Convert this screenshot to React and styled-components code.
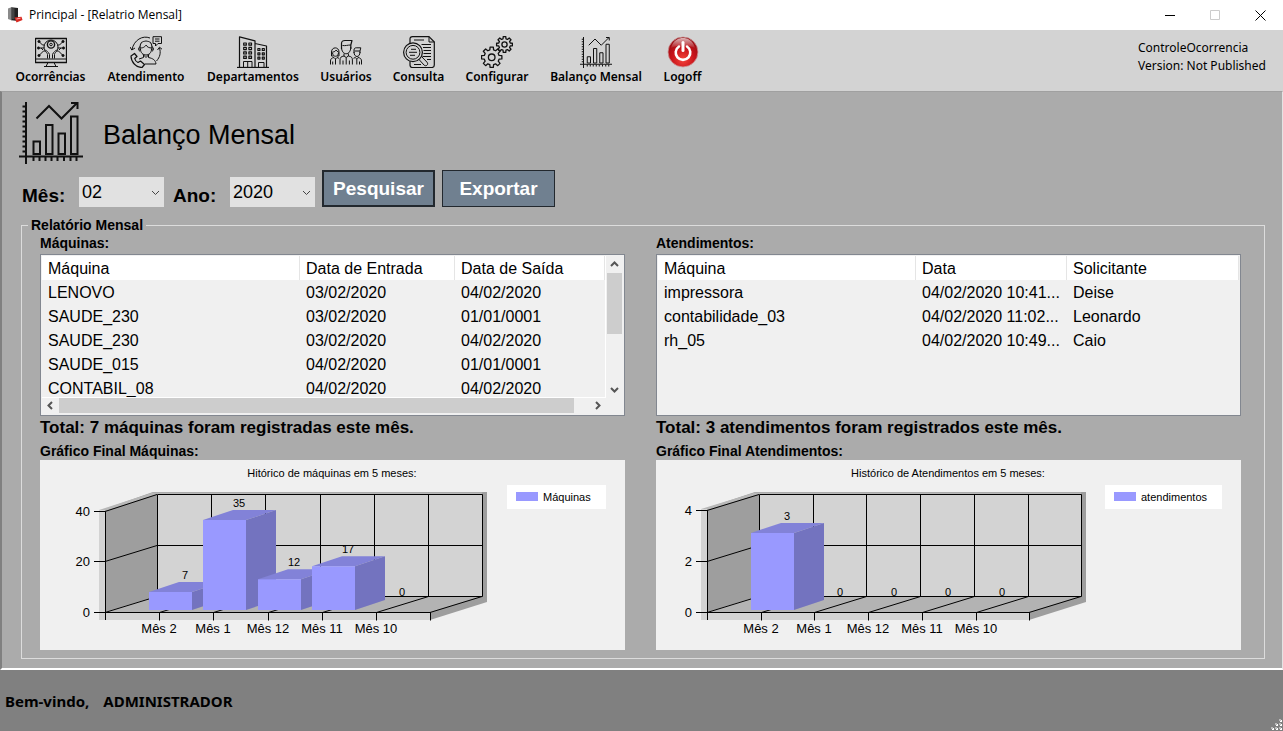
import React from "react";
import styled, { createGlobalStyle } from "styled-components";

const SANS = '"Liberation Sans", Arial, sans-serif';
const UI = '"Noto Sans", "Open Sans", sans-serif';

const GlobalStyle = createGlobalStyle`
  *, *::before, *::after { box-sizing: border-box; }
  body { margin: 0; background: #ababab; color: #000; font-family: ${SANS}; }
  button, select { font: inherit; color: inherit; margin: 0; border-radius: 0; }
`;

/* ---------- window frame ---------- */

const Window = styled.div`
  display: flex;
  flex-direction: column;
  min-height: 100vh;
`;

const TitleBar = styled.header`
  display: flex;
  align-items: center;
  height: 30px;
  padding-left: 7px;
  background: #fff;
  font: 12px/16px "Open Sans", "Noto Sans", sans-serif;
`;

const WindowTitle = styled.span`
  flex: 1;
  padding-left: 6px;
  white-space: nowrap;
`;

const WindowButton = styled.button`
  display: grid;
  place-items: center;
  width: 45px;
  height: 28px;
  padding: 0;
  border: 0;
  background: none;
`;

const ToolBar = styled.nav`
  display: flex;
  gap: 20px;
  height: 61px;
  padding: 6px 15px 0;
  background: #d3d3d3;
`;

const ToolButton = styled.button`
  display: flex;
  flex-direction: column;
  align-items: center;
  flex: none;
  width: ${(p) => p.$width}px;
  height: 50px;
  padding: 0;
  border: 0;
  background: none;
  font: 600 12px/18px ${UI};
  white-space: nowrap;

  svg { flex: none; display: block; }
`;

const Version = styled.div`
  margin-left: auto;
  padding-top: 3px;
  width: 130px;
  font: 12px/18px ${UI};
  white-space: nowrap;
`;

const Client = styled.main`
  flex: 1;
  border: solid;
  border-width: 1px 1px 2px 2px;
  border-color: #a0a0a0 #e3e3e3 #fff #808080;
  background: #ababab;
`;

const StatusBar = styled.footer`
  position: relative;
  display: flex;
  align-items: center;
  gap: 14px;
  height: 61px;
  padding-left: 5px;
  background: #808080;
  font: 700 15px/20px ${UI};
`;

const Grip = styled.svg`
  position: absolute;
  right: 1px;
  bottom: 1px;
`;

/* ---------- page ---------- */

const PageHead = styled.div`
  display: flex;
  align-items: center;
  gap: 20px;
  padding: 8px 17px 0;
`;

const PageTitle = styled.h1`
  margin: 0;
  padding-top: 6px;
  font-size: 27px;
  line-height: 32px;
  font-weight: 400;
`;

const Filters = styled.form`
  display: flex;
  align-items: flex-end;
  gap: 7px;
  padding: 6px 18px 10px;
`;

const Field = styled.div`
  display: flex;
  align-items: flex-end;
`;

const FieldLabel = styled.label`
  width: 59px;
  padding-left: 2px;
  font-size: 19px;
  line-height: 22px;
  font-weight: 700;
`;

const Combo = styled.div`
  position: relative;
  width: 85px;
  height: 30px;

  svg { position: absolute; right: 4px; top: 11px; pointer-events: none; }
`;

const ComboSelect = styled.select`
  appearance: none;
  width: 100%;
  height: 100%;
  padding: 0 16px 0 3px;
  border: 0;
  background: #e1e1e1;
  font-size: 18px;
  line-height: 30px;
`;

const ActionButton = styled.button`
  width: 113px;
  height: 37px;
  padding: 0;
  border: ${(p) => (p.$primary ? 2 : 1)}px solid #22282e;
  background: #708090;
  color: #fff;
  font-size: 19px;
  line-height: 24px;
  font-weight: 700;
`;

const Group = styled.fieldset`
  display: grid;
  grid-template-columns: minmax(0, 1fr) minmax(0, 1fr);
  gap: 31px;
  margin: 0 17px 9px 19px;
  padding: 1px 23px 8px 18px;
  border: 1px solid #dcdcdc;
`;

const GroupTitle = styled.legend`
  margin-left: -12px;
  padding: 0 3px;
  font-size: 14px;
  line-height: 16px;
  font-weight: 700;
`;

const Caption = styled.h2`
  margin: 0;
  font-size: 14px;
  line-height: 18px;
  font-weight: 700;
`;

const Total = styled.p`
  margin: 0 0 2px;
  font-size: 17px;
  line-height: 24px;
  font-weight: 700;
  white-space: nowrap;
`;

const ListBox = styled.div`
  display: grid;
  grid-template-columns: minmax(0, 1fr) ${(p) => (p.$scroll ? "17px" : "0")};
  grid-template-rows: minmax(0, 1fr) ${(p) => (p.$scroll ? "16px" : "0")};
  height: 162px;
  margin-top: 2px;
  padding: 1px;
  border: 1px solid #828790;
  background: #f0f0f0;
`;

const ListView = styled.div`
  overflow: hidden;
  border: solid #fff;
  border-width: ${(p) => (p.$scroll ? "0 1px 1px 0" : "0")};
`;

const Table = styled.table`
  width: 100%;
  table-layout: fixed;
  border-collapse: separate;
  border-spacing: 0;
  font-size: 16px;
  line-height: 22px;

  th, td {
    height: 24px;
    padding: 2px 6px 0;
    text-align: left;
    font-weight: 400;
    white-space: nowrap;
    overflow: hidden;
  }
  th { background: #fff; border-right: 1px solid #e5e5e5; }
`;

const ScrollBar = styled.div`
  display: flex;
  flex-direction: ${(p) => (p.$vertical ? "column" : "row")};
  padding: ${(p) => (p.$vertical ? "0 1px" : "0 0 1px")};
`;

const ScrollArrow = styled.button`
  display: grid;
  place-items: center;
  flex: none;
  width: ${(p) => (p.$vertical ? 15 : 17)}px;
  height: ${(p) => (p.$vertical ? 17 : 15)}px;
  padding: 0;
  border: 0;
  background: none;
`;

const Thumb = styled.div`
  flex: ${(p) => p.$size} 1 0;
  background: #cdcdcd;
`;

const Rest = styled.div`
  flex: ${(p) => p.$size} 1 0;
`;

const ChartPanel = styled.div`
  height: 190px;
  background: #f0f0f0;

  svg { display: block; width: 100%; height: 190px; }
  text { font-family: ${SANS}; fill: #000; }
`;

/* ---------- icons ---------- */

const Line = ({ size = 32, box = 32, w = 1, children }) => (
  <svg width={size} height={size} viewBox={`0 0 ${box} ${box}`} fill="none" stroke="#111"
    strokeWidth={w} strokeLinejoin="round" aria-hidden="true">
    {children}
  </svg>
);

const MonitorIcon = () => (
  <Line>
    <rect x="0.5" y="2.5" width="31" height="24" strokeWidth="1.3" />
    <path d="M.5 23h31M13 26.500l-2 4h10l-2-4M9 30.500h14" />
    <path d="M12.500 22.500v-4c0-2-3.500-3-3.500-7.500a7 7 0 0 1 14 0c0 4.500-3.500 5.500-3.500 7.500v4" />
    <circle cx="16" cy="8.500" r="3.600" strokeWidth="1.400" />
    <circle cx="16" cy="8.500" r="1.300" />
    <path d="M10 13.500c2 2.500 3.500 2 4.500 5v4M22 13.500c-2 2.500-3.500 2-4.500 5v4" />
    <path d="M4.500 6l3 3h2M4.500 12h5M4.500 19l4-4h2M27.500 6l-3 3h-2M27.500 12h-5M27.500 19l-4-4h-2M6 12l2 2M26 12l-2 2" />
    <g fill="#111" strokeWidth=".6">
      <circle cx="4" cy="5.500" r="1.200" /><circle cx="3.500" cy="12" r="1.200" /><circle cx="4" cy="19.500" r="1.200" />
      <circle cx="28" cy="5.500" r="1.200" /><circle cx="28.500" cy="12" r="1.200" /><circle cx="28" cy="19.500" r="1.200" />
    </g>
  </Line>
);

const SupportIcon = () => (
  <Line>
    <path d="M23 .7h8.500v6.800H28l-2.500 2.500V7.500H23zM25 3h4.500M25 5.200h4.500" />
    <path d="M20 2C12.500-1 4 4 2 13.500M0 11l1.800 3L5 12" />
    <path d="M29.500 12c1.500 5 .5 9-3 13M27.500 14l2-2.800 2.500 2" />
    <path d="M10 14.500V11c0-8 12-8 12 0v3.500" strokeWidth="1.200" />
    <path d="M10 12c4 0 5-1.500 6-3 1 2 3 3 6 3M10.500 13c0 8 11 8 11 0" />
    <path d="M10 11c-2 0-2 4 0 4M22 11c2 0 2 4 0 4M13 18.500l3 3 3-3" />
    <path d="M13.500 19v2.500L9 23M18.500 19v2.500c4.500 1 7 2.500 7.500 6.500H15" />
    <path d="M4.500 17.500L1 20c0 6 5 11.500 11 11.500l2.500-3-4-3.500-2.500 1.500c-2-1-3-2.500-3.300-4l2.300-2z" strokeWidth="1.200" />
  </Line>
);

const BuildingsIcon = () => (
  <Line>
    <path d="M0 31.500h32" strokeWidth="1.300" />
    <path d="M2.500 31V.8L18 4.800V31M18 7.500l11.500 2.500V31" strokeWidth="1.200" />
    <path d="M6.500 31v-5.500h8.500V31M10.700 25.500V31M21.500 31v-4.500H27V31" />
    <g strokeWidth="1.200">
      {[7, 11.4, 15.8, 20.2].map((y) => (
        <React.Fragment key={y}>
          <rect x="6.700" y={y} width="2.600" height="2.200" />
          <rect x="11.900" y={y} width="2.600" height="2.200" />
        </React.Fragment>
      ))}
      {[12.5, 16.8, 21.1].map((y) => (
        <React.Fragment key={y}>
          <rect x="20.900" y={y} width="2" height="2" />
          <rect x="25.300" y={y} width="2" height="2" />
        </React.Fragment>
      ))}
    </g>
  </Line>
);

const UsersIcon = () => (
  <Line>
    <path d="M11.500 13V7.500c0-2 1.500-3 3.500-3h7L20.800 9v4" strokeWidth="1.200" />
    <path d="M11.500 11c0 9 9.300 9 9.300 0M12.500 9.500c3 .5 5-.5 8.300-.5M14 17.500v2.500l2.200 1.500 2.200-1.500v-2.500" />
    <path d="M14 20c-3 .5-4 1.500-4 4v4.500M18.400 20c3 .5 4 1.500 4 4v4.500M16.200 21.500v7M13 24.500v4M19.400 24.500v4" />
    <path d="M1.500 20v-4c0-5.500 7.500-5.500 7.500 0v4M2.500 16c2 0 3-1 3.500-2 .5 1 1.500 1.500 2.500 2M2.500 16.500c0 5 6 5 6 0M1.500 20h2M7 20h2" />
    <path d="M.5 28.500V25c0-2 1-3 3.500-3.500l1.500 1.500L7 21.500l2 .8M2.700 25.500v3M5.500 23v5.500" />
    <path d="M24 17v-3c0-1.500 1-2.200 2.200-2.200h4.600L30 15v2M24 16c0 6 6 6 6 0M24.500 15H30" />
    <path d="M31.500 28.500V25c0-2-1-3-3.500-3.500L26.800 23l-1.600-1.500-1.700.8M29.500 25.500v3M26.800 23v5.500" />
  </Line>
);

const SearchDocIcon = () => (
  <Line>
    <path d="M7 8V3C7 1.500 7.800.7 9.500.7H26l5.300 5.300v23c0 1.500-.8 2.500-2.500 2.500H9.500C7.800 31.500 7 30.500 7 29v-4" strokeWidth="1.200" />
    <path d="M26 .7V6h5.300M11 4h10M18.500 8.500H28M20 11.500h8M20.500 14.500H28M20.500 17.500H28M19.500 20.500H28M24 23.500h4M11 28.500h7" />
    <circle cx="10" cy="16.300" r="9.400" strokeWidth="1.200" />
    <circle cx="10" cy="16.300" r="6.900" />
    <path d="M8 13.300h5M6 16.300h8M7 19.300h5M16 23.500l5 5.500c2 2 5-.5 3-2.800L18.500 20.500" />
  </Line>
);

function gear(cx, cy, outer, inner, teeth) {
  const step = (Math.PI * 2) / teeth;
  const pts = [];
  for (let i = 0; i < teeth; i += 1) {
    [[-0.32, inner], [-0.2, outer], [0.2, outer], [0.32, inner]].forEach(([k, r]) => {
      const a = (i + k) * step;
      pts.push(`${(cx + r * Math.cos(a)).toFixed(2)} ${(cy + r * Math.sin(a)).toFixed(2)}`);
    });
  }
  return `M${pts.join("L")}Z`;
}

const GearsIcon = () => (
  <Line w={1.3}>
    <path d={gear(10.7, 21.3, 10.3, 7.6, 8)} />
    <circle cx="10.700" cy="21.300" r="3.300" />
    <path d={gear(23.5, 8.5, 8, 5.9, 8)} />
    <circle cx="23.500" cy="8.500" r="2.600" />
  </Line>
);

const ChartIcon = ({ size }) => (
  <Line size={size} box={64} w={2}>
    <path d="M7 2v62M0 56.500h64" />
    <path d="M3.500 6.500H7M3.500 11.500H7M3.500 16.500H7M3.500 21.500H7M3.500 26.500H7M3.500 31.500H7M3.500 36.500H7M3.500 41.500H7M3.500 46.500H7M3.500 51.500H7" />
    <path d="M14.500 57v4M20.500 57v4M26.500 57v4M32.500 57v4M38.500 57v4M45 57v4M51.500 57v4M57.500 57v4" />
    <path d="M14.500 54V41.500h6.500V54zM27 54V25h6.500v29zM39.500 54V33.500H46V54zM52 54V16.500h6.500V54z" strokeLinejoin="miter" />
    <path d="M17.500 18.500L30 6l12.500 12.500L57.500 3.500M52 3h6.500v6" strokeLinejoin="miter" />
  </Line>
);

const PowerIcon = () => (
  <svg width="32" height="32" viewBox="0 0 32 32" aria-hidden="true">
    <defs>
      <radialGradient id="red" cx=".5" cy=".75" r=".75">
        <stop offset="0" stopColor="#f4443a" />
        <stop offset=".5" stopColor="#c9141b" />
        <stop offset="1" stopColor="#8d0a10" />
      </radialGradient>
      <linearGradient id="gloss" x1="0" y1="0" x2="0" y2="1">
        <stop offset="0" stopColor="#fff" stopOpacity=".7" />
        <stop offset="1" stopColor="#fff" stopOpacity=".05" />
      </linearGradient>
    </defs>
    <circle cx="16" cy="16" r="15" fill="url(#red)" stroke="#c99" strokeWidth=".8" />
    <path d="M4 12C6 4 12 2 16 2s10 2 12 10c-6-3-18-3-24 0z" fill="url(#gloss)" />
    <path d="M12 10.500a7.300 7.300 0 1 0 8 0" fill="none" stroke="#fff" strokeWidth="2.600" strokeLinecap="round" />
    <path d="M16 6.500v8" stroke="#fff" strokeWidth="3" strokeLinecap="round" />
  </svg>
);

const AppIcon = () => (
  <svg width="16" height="16" viewBox="0 0 16 16" aria-hidden="true">
    <path d="M1 1.500L5 0v13.500L1 12z" fill="#8a8a8a" />
    <path d="M4.500.2L11 1v13l-6.500-.8z" fill="#222" />
    <path d="M5 1l2.500.3v11L5 12z" fill="#444" />
    <path d="M7.500 10.500l7-.8 1 3.300-6 2.500z" fill="#d92a22" />
    <path d="M9.500 12l4-.8" stroke="#fbb" strokeWidth=".9" />
  </svg>
);

const arrows = {
  up: "M1 6l3.500-3.500L8 6",
  down: "M1 3l3.500 3.500L8 3",
  left: "M6 1L2.500 4.500 6 8",
  right: "M3 1l3.500 3.500L3 8",
};

const Chevron = ({ dir, w = 2, color = "#555" }) => (
  <svg width="9" height="9" viewBox="0 0 9 9" fill="none" stroke={color} strokeWidth={w} aria-hidden="true">
    <path d={arrows[dir]} />
  </svg>
);

/* ---------- chart ---------- */

const FLOOR = 152;
const DX = 52;

function Chart({ title, series, left, step, scale, top, legendX, ticks, data }) {
  const at = (i) => left + Math.round(step * i);
  const right = at(6);
  const lines = [1, 2, 3, 4, 5].map(at);
  const unit = 102.8 / scale;
  return (
    <svg viewBox="0 0 585 190" role="img" aria-label={title}>
      <text x="292" y="17" fontSize="11" textAnchor="middle">{title}</text>

      <path d={`M${left - 6} ${top}L${left + DX - 4} 32H${right + DX + 5}V142L${right} 160H${left - 6}z`} fill="#9e9e9e" />
      <path d={`M${left - 6} ${top - 1}L${left + DX - 4} 32.500H${right + DX}v2H${left + DX}L${left} ${top}z`} fill="#b8b8b8" />
      <path d={`M${left - 6} ${top - 1}h6V${FLOOR}H${right}v8H${left - 6}z`} fill="#d3d3d3" />
      <path d={`M${left + DX} 34H${right + DX}v102H${left + DX}z`} fill="#d3d3d3" />
      <path d={`M${left} ${top}L${left + DX} 34V136L${left} ${FLOOR}z`} fill="#9e9e9e" />
      <path d={`M${left} ${FLOOR}L${left + DX} 136H${right + DX}L${right} ${FLOOR}z`} fill="#b3b3b3" />

      <g stroke="#000" fill="none">
        <path d={`M${left + DX}.5 34.500H${right + DX}.5V136.500H${left + DX}.5z`} />
        <path d={`M${left + DX} 85.500H${right + DX}`} />
        {lines.map((x) => (
          <path key={x} d={`M${x + DX}.5 34V136.500L${x}.5 152.500v8`} />
        ))}
        <path d={`M${left}.5 160V${top}.5M${left} ${FLOOR}.5H${right}.5v8M${left + DX} 34.500L${left} ${top}.5`} />
        <path d={`M${left + DX} 85.500L${left} 101.500M${left + DX} 136.500L${left} 152.500M${right + DX} 136.500L${right} 152.500`} />
        <path d={`M${left - 11} ${top}.5h11M${left - 11} 101.500h11M${left - 11} 152.500h11`} />
      </g>

      {ticks.map((t, i) => (
        <text key={t} x={left - 15} y={[top + 5, 106, 157][i]} fontSize="13" textAnchor="end">{t}</text>
      ))}
      {data.map((d, i) => {
        const x = at(i + 1);
        const y = 150 - d.value * unit;
        return (
          <g key={d.label}>
            {d.value > 0 && (
              <>
                <path d={`M${x - 10} ${y}l30 -10h43l-30 10z`} fill="#8282d8" />
                <path d={`M${x + 33} ${y}l30 -10V140l-30 10z`} fill="#7373bf" />
                <path d={`M${x - 10} ${y}h43V150h-43z`} fill="#9999ff" />
              </>
            )}
            <text x={x} y="173" fontSize="13" textAnchor="middle">{d.label}</text>
          </g>
        );
      })}
      {data.map((d, i) => (
        <text key={d.label} x={at(i + 1) + 26} y={d.value ? 137 - d.value * unit : 136}
          fontSize="11" textAnchor="middle">{d.value}</text>
      ))}

      <rect x={legendX} y="25" width={566 - legendX} height="24" fill="#fff" />
      <rect x={legendX + 9} y="32" width="22" height="9" fill="#9999ff" />
      <text x={legendX + 36} y="41" fontSize="11">{series}</text>
    </svg>
  );
}

/* ---------- data ---------- */

const tools = [
  { label: "Ocorrências", width: 71, icon: <MonitorIcon /> },
  { label: "Atendimento", width: 80, icon: <SupportIcon /> },
  { label: "Departamentos", width: 94, icon: <BuildingsIcon /> },
  { label: "Usuários", width: 52, icon: <UsersIcon /> },
  { label: "Consulta", width: 53, icon: <SearchDocIcon /> },
  { label: "Configurar", width: 64, icon: <GearsIcon /> },
  { label: "Balanço Mensal", width: 94, icon: <ChartIcon size={32} /> },
  { label: "Logoff", width: 39, icon: <PowerIcon /> },
];

const machines = {
  columns: ["Máquina", "Data de Entrada", "Data de Saída"],
  widths: [258, 155],
  rows: [
    ["LENOVO", "03/02/2020", "04/02/2020"],
    ["SAUDE_230", "03/02/2020", "01/01/0001"],
    ["SAUDE_230", "03/02/2020", "04/02/2020"],
    ["SAUDE_015", "04/02/2020", "01/01/0001"],
    ["CONTABIL_08", "04/02/2020", "04/02/2020"],
  ],
};

const services = {
  columns: ["Máquina", "Data", "Solicitante"],
  widths: [258, 151],
  rows: [
    ["impressora", "04/02/2020 10:41...", "Deise"],
    ["contabilidade_03", "04/02/2020 11:02...", "Leonardo"],
    ["rh_05", "04/02/2020 10:49...", "Caio"],
  ],
};

const months = ["Mês 2", "Mês 1", "Mês 12", "Mês 11", "Mês 10"];
const withMonths = (values) => values.map((value, i) => ({ value, label: months[i] }));

function DataList({ name, list, scroll }) {
  return (
    <ListBox $scroll={scroll}>
      <ListView $scroll={scroll}>
        <Table aria-label={name}>
          <colgroup>
            {list.widths.map((w) => <col key={w} width={w} />)}
            <col />
          </colgroup>
          <thead>
            <tr>{list.columns.map((c) => <th key={c} scope="col">{c}</th>)}</tr>
          </thead>
          <tbody>
            {list.rows.map((row, i) => (
              <tr key={i}>{row.map((cell, j) => <td key={j}>{cell}</td>)}</tr>
            ))}
          </tbody>
        </Table>
      </ListView>
      {scroll && (
        <>
          <ScrollBar $vertical>
            <ScrollArrow $vertical type="button" aria-label="Rolar para cima"><Chevron dir="up" /></ScrollArrow>
            <Thumb $size={61} />
            <Rest $size={47} />
            <ScrollArrow $vertical type="button" aria-label="Rolar para baixo"><Chevron dir="down" /></ScrollArrow>
          </ScrollBar>
          <ScrollBar>
            <ScrollArrow type="button" aria-label="Rolar para a esquerda"><Chevron dir="left" /></ScrollArrow>
            <Thumb $size={515} />
            <Rest $size={15} />
            <ScrollArrow type="button" aria-label="Rolar para a direita"><Chevron dir="right" /></ScrollArrow>
          </ScrollBar>
        </>
      )}
    </ListBox>
  );
}

function ComboField({ id, label, value }) {
  return (
    <Field>
      <FieldLabel htmlFor={id}>{label}</FieldLabel>
      <Combo>
        <ComboSelect id={id} defaultValue={value}>
          <option>{value}</option>
        </ComboSelect>
        <Chevron dir="down" w={1} color="#444" />
      </Combo>
    </Field>
  );
}

export default function App() {
  return (
    <Window>
      <GlobalStyle />
      <TitleBar>
        <AppIcon />
        <WindowTitle>Principal - [Relatrio Mensal]</WindowTitle>
        <WindowButton type="button" aria-label="Minimizar">
          <svg width="11" height="11" stroke="#000"><path d="M0 5.500h10" /></svg>
        </WindowButton>
        <WindowButton type="button" aria-label="Maximizar" disabled>
          <svg width="11" height="11" stroke="#ccc" fill="none"><path d="M.5.5h9v9h-9z" /></svg>
        </WindowButton>
        <WindowButton type="button" aria-label="Fechar">
          <svg width="11" height="11" stroke="#000"><path d="M.5.5l10 10M10.500.5l-10 10" /></svg>
        </WindowButton>
      </TitleBar>

      <ToolBar>
        {tools.map((t) => (
          <ToolButton key={t.label} type="button" $width={t.width}>
            {t.icon}
            {t.label}
          </ToolButton>
        ))}
        <Version>
          ControleOcorrencia
          <br />
          Version: Not Published
        </Version>
      </ToolBar>

      <Client>
        <PageHead>
          <ChartIcon size={64} />
          <PageTitle>Balanço Mensal</PageTitle>
        </PageHead>

        <Filters onSubmit={(e) => e.preventDefault()}>
          <ComboField id="mes" label="Mês:" value="02" />
          <ComboField id="ano" label="Ano:" value="2020" />
          <ActionButton $primary type="submit">Pesquisar</ActionButton>
          <ActionButton type="button">Exportar</ActionButton>
        </Filters>

        <Group>
          <GroupTitle>Relatório Mensal</GroupTitle>
          <section>
            <Caption>Máquinas:</Caption>
            <DataList name="Máquinas" list={machines} scroll />
            <Total>Total: 7 máquinas foram registradas este mês.</Total>
            <Caption>Gráfico Final Máquinas:</Caption>
            <ChartPanel>
              <Chart title="Hitórico de máquinas em 5 meses:" series="Máquinas" left={65} step={54.2} top={51} scale={40}
                legendX={467} ticks={[40, 20, 0]} data={withMonths([7, 35, 12, 17, 0])} />
            </ChartPanel>
          </section>
          <section>
            <Caption>Atendimentos:</Caption>
            <DataList name="Atendimentos" list={services} />
            <Total>Total: 3 atendimentos foram registrados este mês.</Total>
            <Caption>Gráfico Final Atendimentos:</Caption>
            <ChartPanel>
              <Chart title="Histórico de Atendimentos em 5 meses:" series="atendimentos" left={51} step={53.7} top={50} scale={4}
                legendX={449} ticks={[4, 2, 0]} data={withMonths([3, 0, 0, 0, 0])} />
            </ChartPanel>
          </section>
        </Group>
      </Client>

      <StatusBar>
        <span>Bem-vindo,</span>
        <span>ADMINISTRADOR</span>
        <Grip width="11" height="11" viewBox="0 0 11 11" aria-hidden="true">
          {[[8, 0], [4, 4], [8, 4], [0, 8], [4, 8], [8, 8]].map(([x, y]) => (
            <g key={`${x}-${y}`}>
              <rect x={x + 1} y={y + 1} width="2" height="2" fill="#fff" />
              <rect x={x} y={y} width="2" height="2" fill="#bbb" />
            </g>
          ))}
        </Grip>
      </StatusBar>
    </Window>
  );
}
